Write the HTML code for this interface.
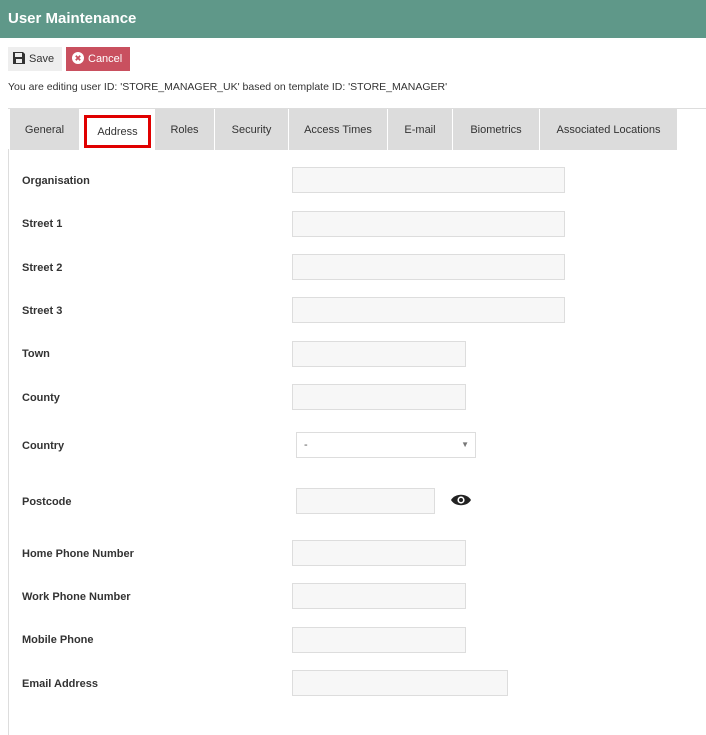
<!DOCTYPE html><html><head><style>
body{margin:0;width:706px;height:735px;overflow:hidden;background:#fff;font-family:"Liberation Sans",sans-serif;position:relative}
.hd{position:absolute;left:0;top:0;width:706px;height:38px;background:#5f9889;color:#fff;font-weight:bold;font-size:15px;line-height:38px;padding-left:8px;box-sizing:border-box}
.btn{position:absolute;top:47px;height:24px;font-size:11px;line-height:24px;box-sizing:border-box}
.info{position:absolute;left:8px;top:81px;font-size:10.5px;color:#333}
.tabs{position:absolute;left:8px;top:108px;width:698px;border-top:1px solid #ddd}
.tab{position:absolute;top:0;height:41px;background:#dcdcdc;font-size:11px;color:#333;text-align:center;line-height:42px;border-right:1px solid #fff;box-sizing:border-box}
.panel{position:absolute;left:8px;top:149px;width:1px;height:586px;background:#ddd}
.lb{position:absolute;left:22px;font-size:11px;font-weight:bold;color:#333}
.in{position:absolute;height:26px;background:#f7f7f7;border:1px solid #ddd;box-sizing:border-box}
</style></head><body>
<div class="hd">User Maintenance</div>
<div class="btn" style="left:8px;width:54px;background:#eee;color:#333;padding-left:5px">
<svg width="12" height="12" viewBox="0 0 12 12" style="vertical-align:-2px;margin-right:4px"><path d="M0 0h10l2 2v10H0z" fill="#333"/><rect x="2" y="1" width="7" height="4" fill="#eee"/><rect x="3" y="7" width="6" height="4" fill="#eee"/></svg>Save</div>
<div class="btn" style="left:66px;width:64px;background:#c9505f;color:#fff;padding-left:6px">
<svg width="12" height="12" viewBox="0 0 12 12" style="vertical-align:-2px;margin-right:4px"><circle cx="6" cy="6" r="6" fill="#fff"/><path d="M3.8 3.8l4.4 4.4M8.2 3.8l-4.4 4.4" stroke="#c9505f" stroke-width="1.8"/></svg>Cancel</div>
<div class="info">You are editing user ID: 'STORE_MANAGER_UK' based on template ID: 'STORE_MANAGER'</div>
<div class="tabs">
<div class="tab" style="left:2px;width:70px">General</div>
<div class="tab" style="left:72px;width:75px;background:#fff"><div style="position:absolute;left:4px;top:6px;width:67px;height:33px;border:3px solid #e00000;box-sizing:border-box;line-height:29px">Address</div></div>
<div class="tab" style="left:147px;width:60px">Roles</div>
<div class="tab" style="left:207px;width:74px">Security</div>
<div class="tab" style="left:281px;width:99px">Access Times</div>
<div class="tab" style="left:380px;width:65px">E-mail</div>
<div class="tab" style="left:445px;width:87px">Biometrics</div>
<div class="tab" style="left:532px;width:137px;border-right:0">Associated Locations</div>
</div>
<div class="panel"></div>
<div class="lb" style="top:175px">Organisation</div><div class="in" style="left:292px;top:167px;width:273px"></div>
<div class="lb" style="top:218px">Street 1</div><div class="in" style="left:292px;top:211px;width:273px"></div>
<div class="lb" style="top:262px">Street 2</div><div class="in" style="left:292px;top:254px;width:273px"></div>
<div class="lb" style="top:305px">Street 3</div><div class="in" style="left:292px;top:297px;width:273px"></div>
<div class="lb" style="top:348px">Town</div><div class="in" style="left:292px;top:341px;width:174px"></div>
<div class="lb" style="top:392px">County</div><div class="in" style="left:292px;top:384px;width:174px"></div>
<div class="lb" style="top:440px">Country</div>
<div class="in" style="left:296px;top:432px;width:180px;background:#fff;font-size:11px;line-height:24px;padding-left:7px;color:#555">-<span style="position:absolute;right:6px;top:0;font-size:8px;color:#777">▼</span></div>
<div class="lb" style="top:496px">Postcode</div><div class="in" style="left:296px;top:488px;width:139px"></div>
<svg style="position:absolute;left:450px;top:493px" width="22" height="14" viewBox="0 0 22 14"><path d="M1 7C5 0 17 0 21 7C17 14 5 14 1 7z" fill="#222"/><circle cx="11" cy="7" r="3.6" fill="#fff"/><circle cx="11" cy="7" r="2" fill="#222"/></svg>
<div class="lb" style="top:548px">Home Phone Number</div><div class="in" style="left:292px;top:540px;width:174px"></div>
<div class="lb" style="top:591px">Work Phone Number</div><div class="in" style="left:292px;top:583px;width:174px"></div>
<div class="lb" style="top:634px">Mobile Phone</div><div class="in" style="left:292px;top:627px;width:174px"></div>
<div class="lb" style="top:678px">Email Address</div><div class="in" style="left:292px;top:670px;width:216px"></div>
</body></html>
